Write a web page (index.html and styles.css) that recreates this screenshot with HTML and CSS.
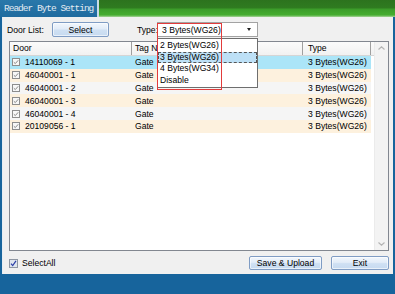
FILE: index.html
```html
<!DOCTYPE html>
<html>
<head>
<meta charset="utf-8">
<link rel="stylesheet" href="styles.css">
</head>
<body>
<div class="screen">
  <div class="titlebar">
    <div class="title-tab">Reader Byte Setting</div>
    <div class="title-sep"></div>
    <div class="title-green"></div>
  </div>
  <div class="frame">
    <div class="dialog">
      <div class="toolbar">
        <span class="lbl lbl-door">Door List:</span>
        <button class="btn btn-select">Select</button>
        <span class="lbl lbl-type">Type:</span>
        <div class="combo">
          <span class="combo-text">3 Bytes(WG26)</span>
          <span class="combo-arrow"></span>
          <div class="dropdown">
            <div class="dd-item">2 Bytes(WG26)</div>
            <div class="dd-item dd-sel">3 Bytes(WG26)</div>
            <div class="dd-item">4 Bytes(WG34)</div>
            <div class="dd-item">Disable</div>
          </div>
          <div class="redbox"></div>
        </div>
      </div>

      <div class="list">
        <div class="list-main">
          <div class="lv-head">
            <div class="hc">Door</div>
            <div class="hc">Tag Name</div>
            <div class="hc">Type</div>
          </div>
          <div class="lv-row r-sel">
            <div class="c c-door"><svg class="chk" viewBox="0 0 8 8"><rect x="0.5" y="0.5" width="7" height="7"/><path d="M1.8 4.2 L3.3 5.6 L6.2 2.3"/></svg>14110069 - 1</div>
            <div class="c">Gate</div>
            <div class="c c-type">3 Bytes(WG26)</div>
          </div>
          <div class="lv-row r-peach">
            <div class="c c-door"><svg class="chk" viewBox="0 0 8 8"><rect x="0.5" y="0.5" width="7" height="7"/><path d="M1.8 4.2 L3.3 5.6 L6.2 2.3"/></svg>46040001 - 1</div>
            <div class="c">Gate</div>
            <div class="c c-type">3 Bytes(WG26)</div>
          </div>
          <div class="lv-row r-gray">
            <div class="c c-door"><svg class="chk" viewBox="0 0 8 8"><rect x="0.5" y="0.5" width="7" height="7"/><path d="M1.8 4.2 L3.3 5.6 L6.2 2.3"/></svg>46040001 - 2</div>
            <div class="c">Gate</div>
            <div class="c c-type">3 Bytes(WG26)</div>
          </div>
          <div class="lv-row r-peach">
            <div class="c c-door"><svg class="chk" viewBox="0 0 8 8"><rect x="0.5" y="0.5" width="7" height="7"/><path d="M1.8 4.2 L3.3 5.6 L6.2 2.3"/></svg>46040001 - 3</div>
            <div class="c">Gate</div>
            <div class="c c-type">3 Bytes(WG26)</div>
          </div>
          <div class="lv-row r-gray">
            <div class="c c-door"><svg class="chk" viewBox="0 0 8 8"><rect x="0.5" y="0.5" width="7" height="7"/><path d="M1.8 4.2 L3.3 5.6 L6.2 2.3"/></svg>46040001 - 4</div>
            <div class="c">Gate</div>
            <div class="c c-type">3 Bytes(WG26)</div>
          </div>
          <div class="lv-row r-peach">
            <div class="c c-door"><svg class="chk" viewBox="0 0 8 8"><rect x="0.5" y="0.5" width="7" height="7"/><path d="M1.8 4.2 L3.3 5.6 L6.2 2.3"/></svg>20109056 - 1</div>
            <div class="c">Gate</div>
            <div class="c c-type">3 Bytes(WG26)</div>
          </div>
        </div>
        <div class="vscroll">
          <svg class="sarrow" viewBox="0 0 7 4"><path d="M0.5 3.5 L3.5 0.8 L6.5 3.5"/></svg>
          <svg class="sarrow" viewBox="0 0 7 4"><path d="M0.5 0.5 L3.5 3.2 L6.5 0.5"/></svg>
        </div>
      </div>

      <div class="footer">
        <div class="selall">
          <svg class="chk-all" viewBox="0 0 9 9"><rect x="0.5" y="0.5" width="8" height="8"/><path d="M2 4.6 L3.7 6.6 L7 1.8"/></svg>
          <span>SelectAll</span>
        </div>
        <div class="spacer"></div>
        <button class="btn btn-save">Save &amp; Upload</button>
        <button class="btn btn-exit">Exit</button>
      </div>
    </div>
  </div>
  <div class="bottomband"></div>
</div>
</body>
</html>
```

FILE: styles.css
```css
* { box-sizing: border-box; }
html, body { margin: 0; padding: 0; }
body {
  background: #17649c;
  font-family: "Liberation Sans", Arial, sans-serif;
  font-size: 8.6px;
  color: #000;
}
.screen {
  width: 395px;
  height: 294px;
  display: flex;
  flex-direction: column;
  overflow: hidden;
}

/* title bar */
.titlebar {
  height: 17px;
  display: flex;
  flex: none;
}
.title-tab {
  width: 97px;
  background: linear-gradient(#2a78aa, #1f6b9f);
  color: #e2ebf2;
  font-family: "Liberation Mono", "Courier New", monospace;
  font-size: 9.5px;
  letter-spacing: -1px;
  line-height: 17px;
  padding-left: 4px;
  white-space: nowrap;
  overflow: hidden;
}
.title-sep {
  width: 2px;
  background: #c9dbe6;
}
.title-green {
  flex: 1;
  background: linear-gradient(#2c731e 0%, #2f7b20 45%, #3c9d2a 55%, #45ad30 88%, #a8d49a 100%);
}

/* frame */
.frame {
  flex: none;
  height: 257px;
  display: flex;
  background: #17649c;
  padding-left: 2px;
  padding-right: 2px;
}
.dialog {
  flex: 1;
  background: #f0f0f0;
  display: flex;
  flex-direction: column;
  border-left: 1px solid #e6edf3;
}
.bottomband {
  flex: 1;
  background: #17649c;
}

/* toolbar */
.toolbar {
  display: flex;
  align-items: center;
  height: 15px;
  margin-top: 5px;
  padding-left: 4px;
  position: relative;
  z-index: 5;
}
.lbl { white-space: nowrap; }
.lbl-door { width: 45px; }
.lbl-type { width: 20px; margin-left: 28px; }

.btn {
  font-family: "Liberation Sans", Arial, sans-serif;
  font-size: 8.6px;
  color: #000;
  border: 1px solid #7f9cc4;
  border-radius: 2px;
  background: linear-gradient(#f2f7fd 0%, #e2ecf8 45%, #cfe0f3 55%, #c6daf0 100%);
  padding: 0;
  margin: 0;
  box-shadow: inset 0 0 0 1px rgba(255,255,255,0.6);
}
.btn-select { width: 57px; height: 15px; }

.combo {
  position: relative;
  width: 101px;
  height: 15px;
  background: #fff;
  border: 1px solid #a3a3a3;
  display: flex;
  align-items: center;
}
.combo-text {
  padding-left: 4px;
  flex: 1;
}
.combo-arrow {
  width: 0;
  height: 0;
  border-left: 2.5px solid transparent;
  border-right: 2.5px solid transparent;
  border-top: 3px solid #222;
  margin-right: 6px;
}
.dropdown {
  position: absolute;
  left: -1px;
  top: 15px;
  width: 101px;
  height: 50px;
  background: #fff;
  border: 1px solid #6e6e6e;
  padding-top: 1px;
}
.dd-item {
  height: 11.6px;
  line-height: 11.6px;
  padding-left: 2px;
  white-space: nowrap;
}
.dd-sel {
  background: #bde0f6;
  outline: 1px dashed #555;
  outline-offset: -1px;
}
.redbox {
  position: absolute;
  left: -1px;
  top: 0px;
  width: 65px;
  height: 67px;
  border: 1px solid #e23b3b;
  pointer-events: none;
}

/* list */
.list {
  margin-top: 4px;
  margin-left: 6px;
  margin-right: 4px;
  height: 210px;
  border: 1px solid #828790;
  background: #fff;
  display: flex;
}
.list-main {
  flex: 1;
  display: flex;
  flex-direction: column;
}
.lv-head {
  height: 14px;
  display: grid;
  grid-template-columns: 122px 171px 68px 1fr;
  background: linear-gradient(#fbfbfb, #f1f1f1);
  border-bottom: 1px solid #d5d5d5;
}
.hc {
  border-right: 1px solid #9f9f9f;
  padding-left: 3px;
  line-height: 13px;
  white-space: nowrap;
  overflow: hidden;
}
.hc:nth-child(3) { padding-left: 5px; }
.lv-row {
  height: 12.8px;
  display: grid;
  grid-template-columns: 122px 171px 68px;
  align-items: center;
  width: 361px;
}
.r-sel { background: #abe5f8; }
.r-peach { background: #fdf1de; }
.r-gray { background: #f5f5f5; }
.c {
  white-space: nowrap;
  padding-left: 3px;
}
.c-door {
  display: flex;
  align-items: center;
  padding-left: 2px;
}
.c-type { padding-left: 5px; }
.chk {
  width: 8px;
  height: 8px;
  margin-right: 5px;
  flex: none;
}
.chk rect { fill: #f7f7f7; stroke: #8d8d8d; stroke-width: 1; }
.chk path { fill: none; stroke: #8a8a8a; stroke-width: 1; }

.vscroll {
  width: 14px;
  background: #f3f3f3;
  border-left: 1px solid #ebebeb;
  display: flex;
  flex-direction: column;
  justify-content: space-between;
  align-items: center;
  padding: 4px 0 4px;
}
.sarrow {
  width: 7px;
  height: 4px;
}
.sarrow path { fill: none; stroke: #b4b4b4; stroke-width: 1.2; }

/* footer */
.footer {
  display: flex;
  align-items: center;
  height: 14px;
  margin-top: 5px;
  padding-left: 6px;
  padding-right: 4px;
}
.selall {
  display: flex;
  align-items: center;
}
.chk-all {
  width: 9px;
  height: 9px;
  margin-right: 4px;
  margin-top: 1px;
}
.chk-all rect { fill: #dfe5ee; stroke: #8e96a2; stroke-width: 1; }
.chk-all path { fill: none; stroke: #2b3ea6; stroke-width: 1.2; }
.spacer { flex: 1; }
.btn-save { width: 73px; height: 14px; }
.btn-exit { width: 58px; height: 14px; margin-left: 9px; }
```
